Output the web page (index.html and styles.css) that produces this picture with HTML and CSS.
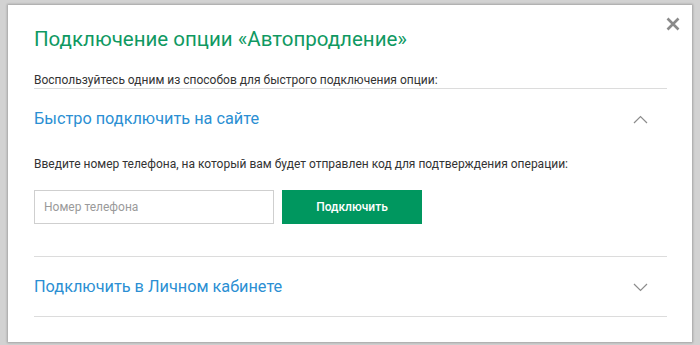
FILE: index.html
```html
<!DOCTYPE html>
<html lang="ru">
    <head>
        <meta charset="UTF-8">
        <title>Подключение опции «Автопродление»</title>
        <link rel="stylesheet" href="styles.css">
    </head>
    <body>
        <div class="modal">
            <button class="close" type="button" aria-label="Закрыть">
                <svg width="14" height="14" viewBox="0 0 14 14"><path d="M1.5 1.5 L12.5 12.5 M12.5 1.5 L1.5 12.5" stroke="#8a8a8a" stroke-width="2.6" fill="none"/></svg>
            </button>
            <h1 class="title">Подключение опции «Автопродление»</h1>
            <p class="intro">Воспользуйтесь одним из способов для быстрого подключения опции:</p>

            <!-- quick connect -->
            <div class="section">
                <div class="section-head">
                    <span>Быстро подключить на сайте</span>
                    <svg class="chevron" width="15" height="9" viewBox="0 0 15 9"><polyline points="1,8 7.5,1.5 14,8" stroke="#8c8c8c" stroke-width="1.2" fill="none"/></svg>
                </div>
                <div class="section-body">
                    <p class="hint">Введите номер телефона, на который вам будет отправлен код для подтверждения операции:</p>
                    <form class="phone-form">
                        <input class="phone" type="text" placeholder="Номер телефона">
                        <button class="btn" type="button">Подключить</button>
                    </form>
                </div>
            </div>

            <!-- personal account -->
            <div class="section">
                <div class="section-head">
                    <span>Подключить в Личном кабинете</span>
                    <svg class="chevron" width="15" height="9" viewBox="0 0 15 9"><polyline points="1,1 7.5,7.5 14,1" stroke="#8c8c8c" stroke-width="1.2" fill="none"/></svg>
                </div>
            </div>
        </div>
    </body>
</html>
```

FILE: styles.css
```css
html, body {
    margin: 0;
    padding: 0;
}
body {
    background-color: #d2d2d2;
    font-family: Roboto, "Liberation Sans", sans-serif;
    color: #333;
    padding: 5px 8px 3px 8px;
    height: 345px;
    box-sizing: border-box;
}
.modal {
    position: relative;
    width: 684px;
    height: 337px;
    box-sizing: border-box;
    background-color: #fff;
    box-shadow: 0 0 2px 1px rgba(0, 0, 0, 0.22);
    padding: 22px 25px 0 26px;
}
.close {
    position: absolute;
    top: 12px;
    right: 12px;
    border: none;
    background: none;
    padding: 0;
    width: 14px;
    height: 14px;
    cursor: pointer;
}
.close svg {
    display: block;
}
.title {
    margin: 0;
    font-size: 20.5px;
    line-height: 25px;
    font-weight: 400;
    color: #0f9962;
}
.intro {
    margin: 20px 0 0 0;
    font-size: 12px;
    line-height: 16px;
    border-bottom: 1px solid #dcdcdc;
}
.section {
    border-bottom: 1px solid #dcdcdc;
}
.section-head {
    display: flex;
    align-items: center;
    justify-content: space-between;
    padding: 20px 19px 19px 0;
    font-size: 16.3px;
    line-height: 20px;
    color: #2b8fd3;
}
.chevron {
    display: block;
}
.section-body {
    padding: 8px 0 32px 0;
}
.hint {
    margin: 0;
    font-size: 12px;
    line-height: 16px;
}
.phone-form {
    display: flex;
    gap: 8px;
    margin-top: 18px;
}
.phone {
    width: 240px;
    height: 34px;
    box-sizing: border-box;
    border: 1px solid #cfcfcf;
    padding: 0 9px;
    font-family: Roboto, "Liberation Sans", sans-serif;
    font-size: 12px;
    color: #333;
    outline: none;
}
.phone::placeholder {
    color: #9a9a9a;
}
.btn {
    width: 140px;
    height: 34px;
    border: none;
    background-color: #00975f;
    color: #fff;
    font-family: Roboto, "Liberation Sans", sans-serif;
    font-size: 12px;
    font-weight: 500;
}
```
